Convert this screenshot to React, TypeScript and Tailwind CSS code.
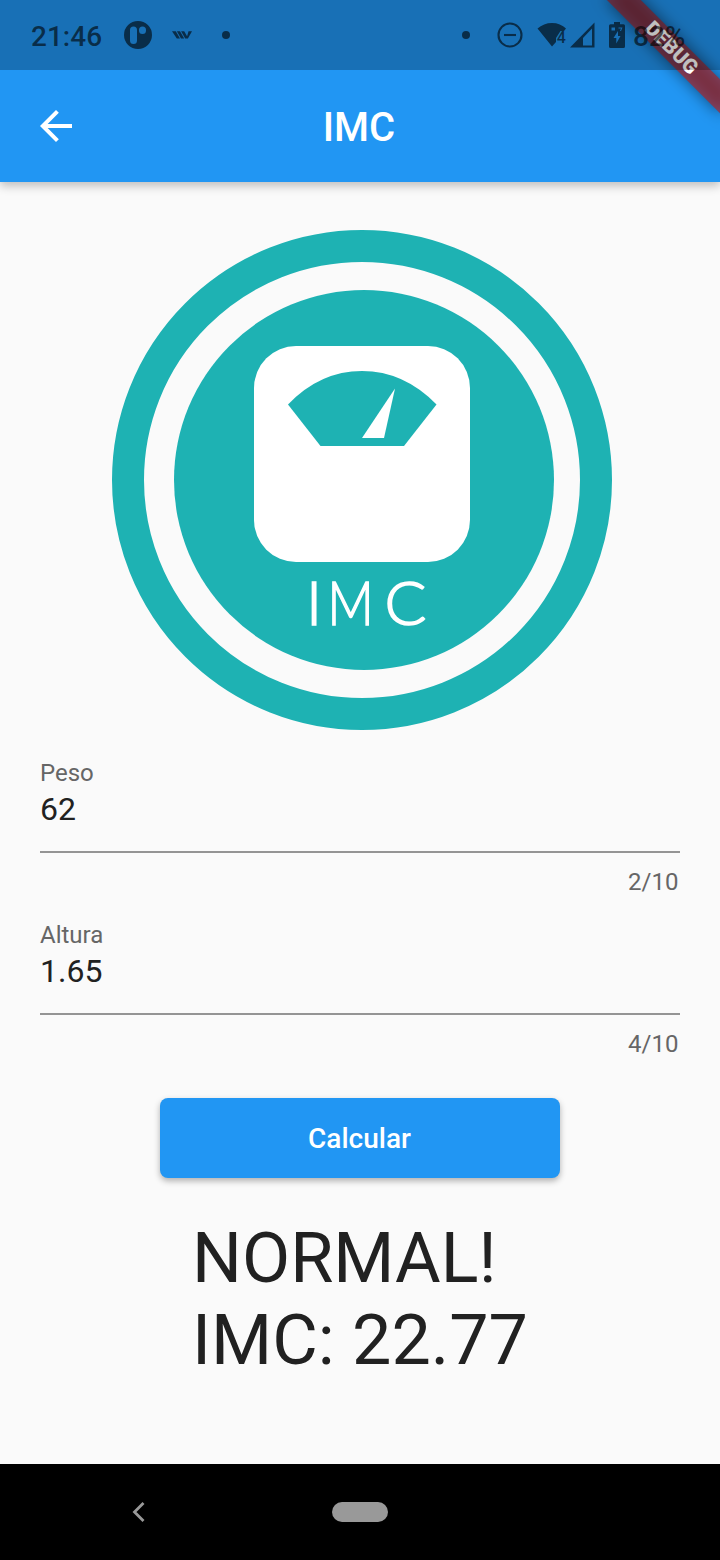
import React from "react";

function StatusBar() {
  return (
    <div className="absolute inset-x-0 top-0 flex h-[70px] items-center bg-black/25 pl-[31px] text-[28px] font-medium text-black/60">
      <span className="w-[93px] leading-[33px] pt-[3px]">21:46</span>
      <svg width="28" height="28" viewBox="0 0 28 28" fill="currentColor">
        <path
          fillRule="evenodd"
          d="M14 0a14 14 0 1 1 0 28a14 14 0 0 1 0-28zM9.500 5.500a3.500 3.500 0 0 0-3.500 3.500v10.500a3.500 3.500 0 0 0 7 0v-10.500a3.500 3.500 0 0 0-3.500-3.500zM18.500 5.500a3.500 3.500 0 0 0-3.500 3.500v.500a3.500 3.500 0 0 0 7 0v-.500a3.500 3.500 0 0 0-3.500-3.500z"
        />
      </svg>
      <svg className="ml-5" width="20" height="8" viewBox="0 0 20 8" fill="currentColor">
        <path d="M0 .3h3.800l4.200 7.200h-3.200zM4.900.3h3.100l4.200 7.200h-3.200zM9.100.3h3.100l2.900 5L16.500.3h3.500l-4.100 7.200h-2.700z" />
      </svg>
      <span className="ml-[30px] size-2 rounded-full bg-current" />
      <span className="ml-[232px] size-2 rounded-full bg-current" />
      <svg className="ml-[27px]" width="26" height="26" viewBox="0 0 26 26" fill="none" stroke="currentColor" strokeWidth="2.100">
        <circle cx="13" cy="13" r="11.500" />
        <path d="M7 13h12" />
      </svg>
      <svg className="ml-[14px]" width="30" height="26" viewBox="0 0 30 26" fill="currentColor">
        <path d="M.5 6.500C4.500 3 9.500 1 15 1s10.500 2 14 5.500L27 9h-3.500l-4.500 7v4L15 24.500z" />
        <text x="19.800" y="21" fontSize="16" fontWeight="500" fontFamily="Roboto, sans-serif">4</text>
      </svg>
      <svg className="ml-[3px]" width="25" height="26" viewBox="0 0 25 26" fill="currentColor">
        <path fillRule="evenodd" d="M0 25.500L24.500 .5v25zM13 16v7.500h9V6.500z" />
      </svg>
      <svg className="ml-[14px]" width="16" height="26" viewBox="0 0 16 26" fill="currentColor">
        <path
          fillRule="evenodd"
          d="M5 0h6v2.300h3.500q1.500 0 1.500 1.500V24.500q0 1.500-1.500 1.500h-13Q0 26 0 24.500V3.800q0-1.500 1.500-1.500H5zM2.500 5.500v3h3.500v-3zM9.500 5.500v1h2.500l-1 2.500h1l1.500-3.500zM9 9l-4.500 7H7.300v5.500l4.200-7.500H9z"
        />
      </svg>
      <span className="ml-2 leading-[33px] pt-[3px]">82%</span>
    </div>
  );
}

function DebugBanner() {
  return (
    <svg className="absolute right-0 top-0" width="150" height="150" viewBox="0 0 150 150">
      <defs>
        <filter id="soft" x="-50%" y="-150%" width="200%" height="400%">
          <feGaussianBlur stdDeviation="7.900" />
        </filter>
      </defs>
      <g transform="translate(150 0) rotate(45)">
        <rect x="-80" y="56" width="160" height="24" fill="#000" fillOpacity="0.5" filter="url(#soft)" />
        <rect x="-80" y="56" width="160" height="24" fill="#b71c1c" fillOpacity="0.627" />
        <text x="-0.500" y="74.800" textAnchor="middle" fontSize="20.400" fontWeight="900" fontFamily="Roboto, sans-serif" fill="#fff">
          DEBUG
        </text>
      </g>
    </svg>
  );
}

function ScaleLogo() {
  return (
    <svg className="ml-[112px] mt-12 block" width="500" height="500" viewBox="112 230 500 500">
      <circle cx="362" cy="480" r="234" fill="none" stroke="#1eb2b3" strokeWidth="32" />
      <circle cx="364" cy="480" r="190" fill="#1eb2b3" />
      <rect x="254" y="346" width="216" height="216" rx="42" fill="#fff" />
      <path d="M288 404.500Q320 371 362 371T436.500 404.500L404 446H320.500z" fill="#1eb2b3" />
      <path d="M395 388.500L384 438H362z" fill="#fff" />
      <g fill="#fff" stroke="#fff" strokeWidth="1.600" fontFamily="Lato, sans-serif" fontWeight="300" fontSize="62">
        <text x="306" y="625">I</text>
        <text transform="translate(327.500 625) scale(0.820 1)">M</text>
        <text x="384.500" y="625">C</text>
      </g>
    </svg>
  );
}

function Field({ label, value, max }: { label: string; value: string; max: number }) {
  return (
    <div className="flex flex-col">
      <span className="text-[24px] leading-7 text-[#666]">{label}</span>
      <span className="mt-[3px] border-b-2 border-[#949494] pb-[23px] text-[32px] leading-[38px] text-[#212121]">{value}</span>
      <span className="mt-[15px] self-end pr-[1.500px] text-[24px] leading-7 text-[#666]">
        {value.length}/{max}
      </span>
    </div>
  );
}

export default function App() {
  return (
    <div className="relative flex h-[1560px] w-[720px] flex-col overflow-hidden bg-[#fafafa] font-['Roboto',sans-serif]">
      <header className="h-[182px] shrink-0 bg-[#2196f3] pt-[70px] shadow-[0_4px_9px_rgba(0,0,0,0.24)]">
        <div className="grid h-28 grid-cols-[72px_1fr_72px] items-center text-white">
          <svg className="ml-8" width="48" height="48" viewBox="0 0 24 24" fill="currentColor">
            <path d="M20 11H7.830l5.590-5.590L12 4l-8 8 8 8 1.410-1.410L7.830 13H20v-2z" />
          </svg>
          <h1 className="pr-[2px] pt-[2px] text-center text-[40px] font-medium leading-[47px]">IMC</h1>
        </div>
      </header>
      <main className="flex flex-1 flex-col">
        <ScaleLogo />
        <div className="mx-10 mt-[29px] flex flex-col gap-[25px]">
          <Field label="Peso" value="62" max={10} />
          <Field label="Altura" value="1.65" max={10} />
        </div>
        <button className="mt-10 h-20 w-[400px] self-center rounded-lg bg-[#2196f3] pr-px pt-[2px] text-[28px] font-medium text-white shadow-[0_3px_6px_rgba(0,0,0,0.3)]">
          Calcular
        </button>
        <p className="mt-[39px] self-center text-[70px] leading-[82px] text-[#212121]">
          NORMAL!
          <br />
          IMC: 22.77
        </p>
      </main>
      <nav className="flex h-24 shrink-0 items-center bg-black">
        <svg className="ml-[132px]" width="13" height="20" viewBox="0 0 13 20" fill="none" stroke="#999" strokeWidth="2.800">
          <path d="M11.500 1L2.500 10L11.500 19" />
        </svg>
        <span className="ml-[187px] h-5 w-14 rounded-full bg-[#999]" />
      </nav>
      <DebugBanner />
      <StatusBar />
    </div>
  );
}
